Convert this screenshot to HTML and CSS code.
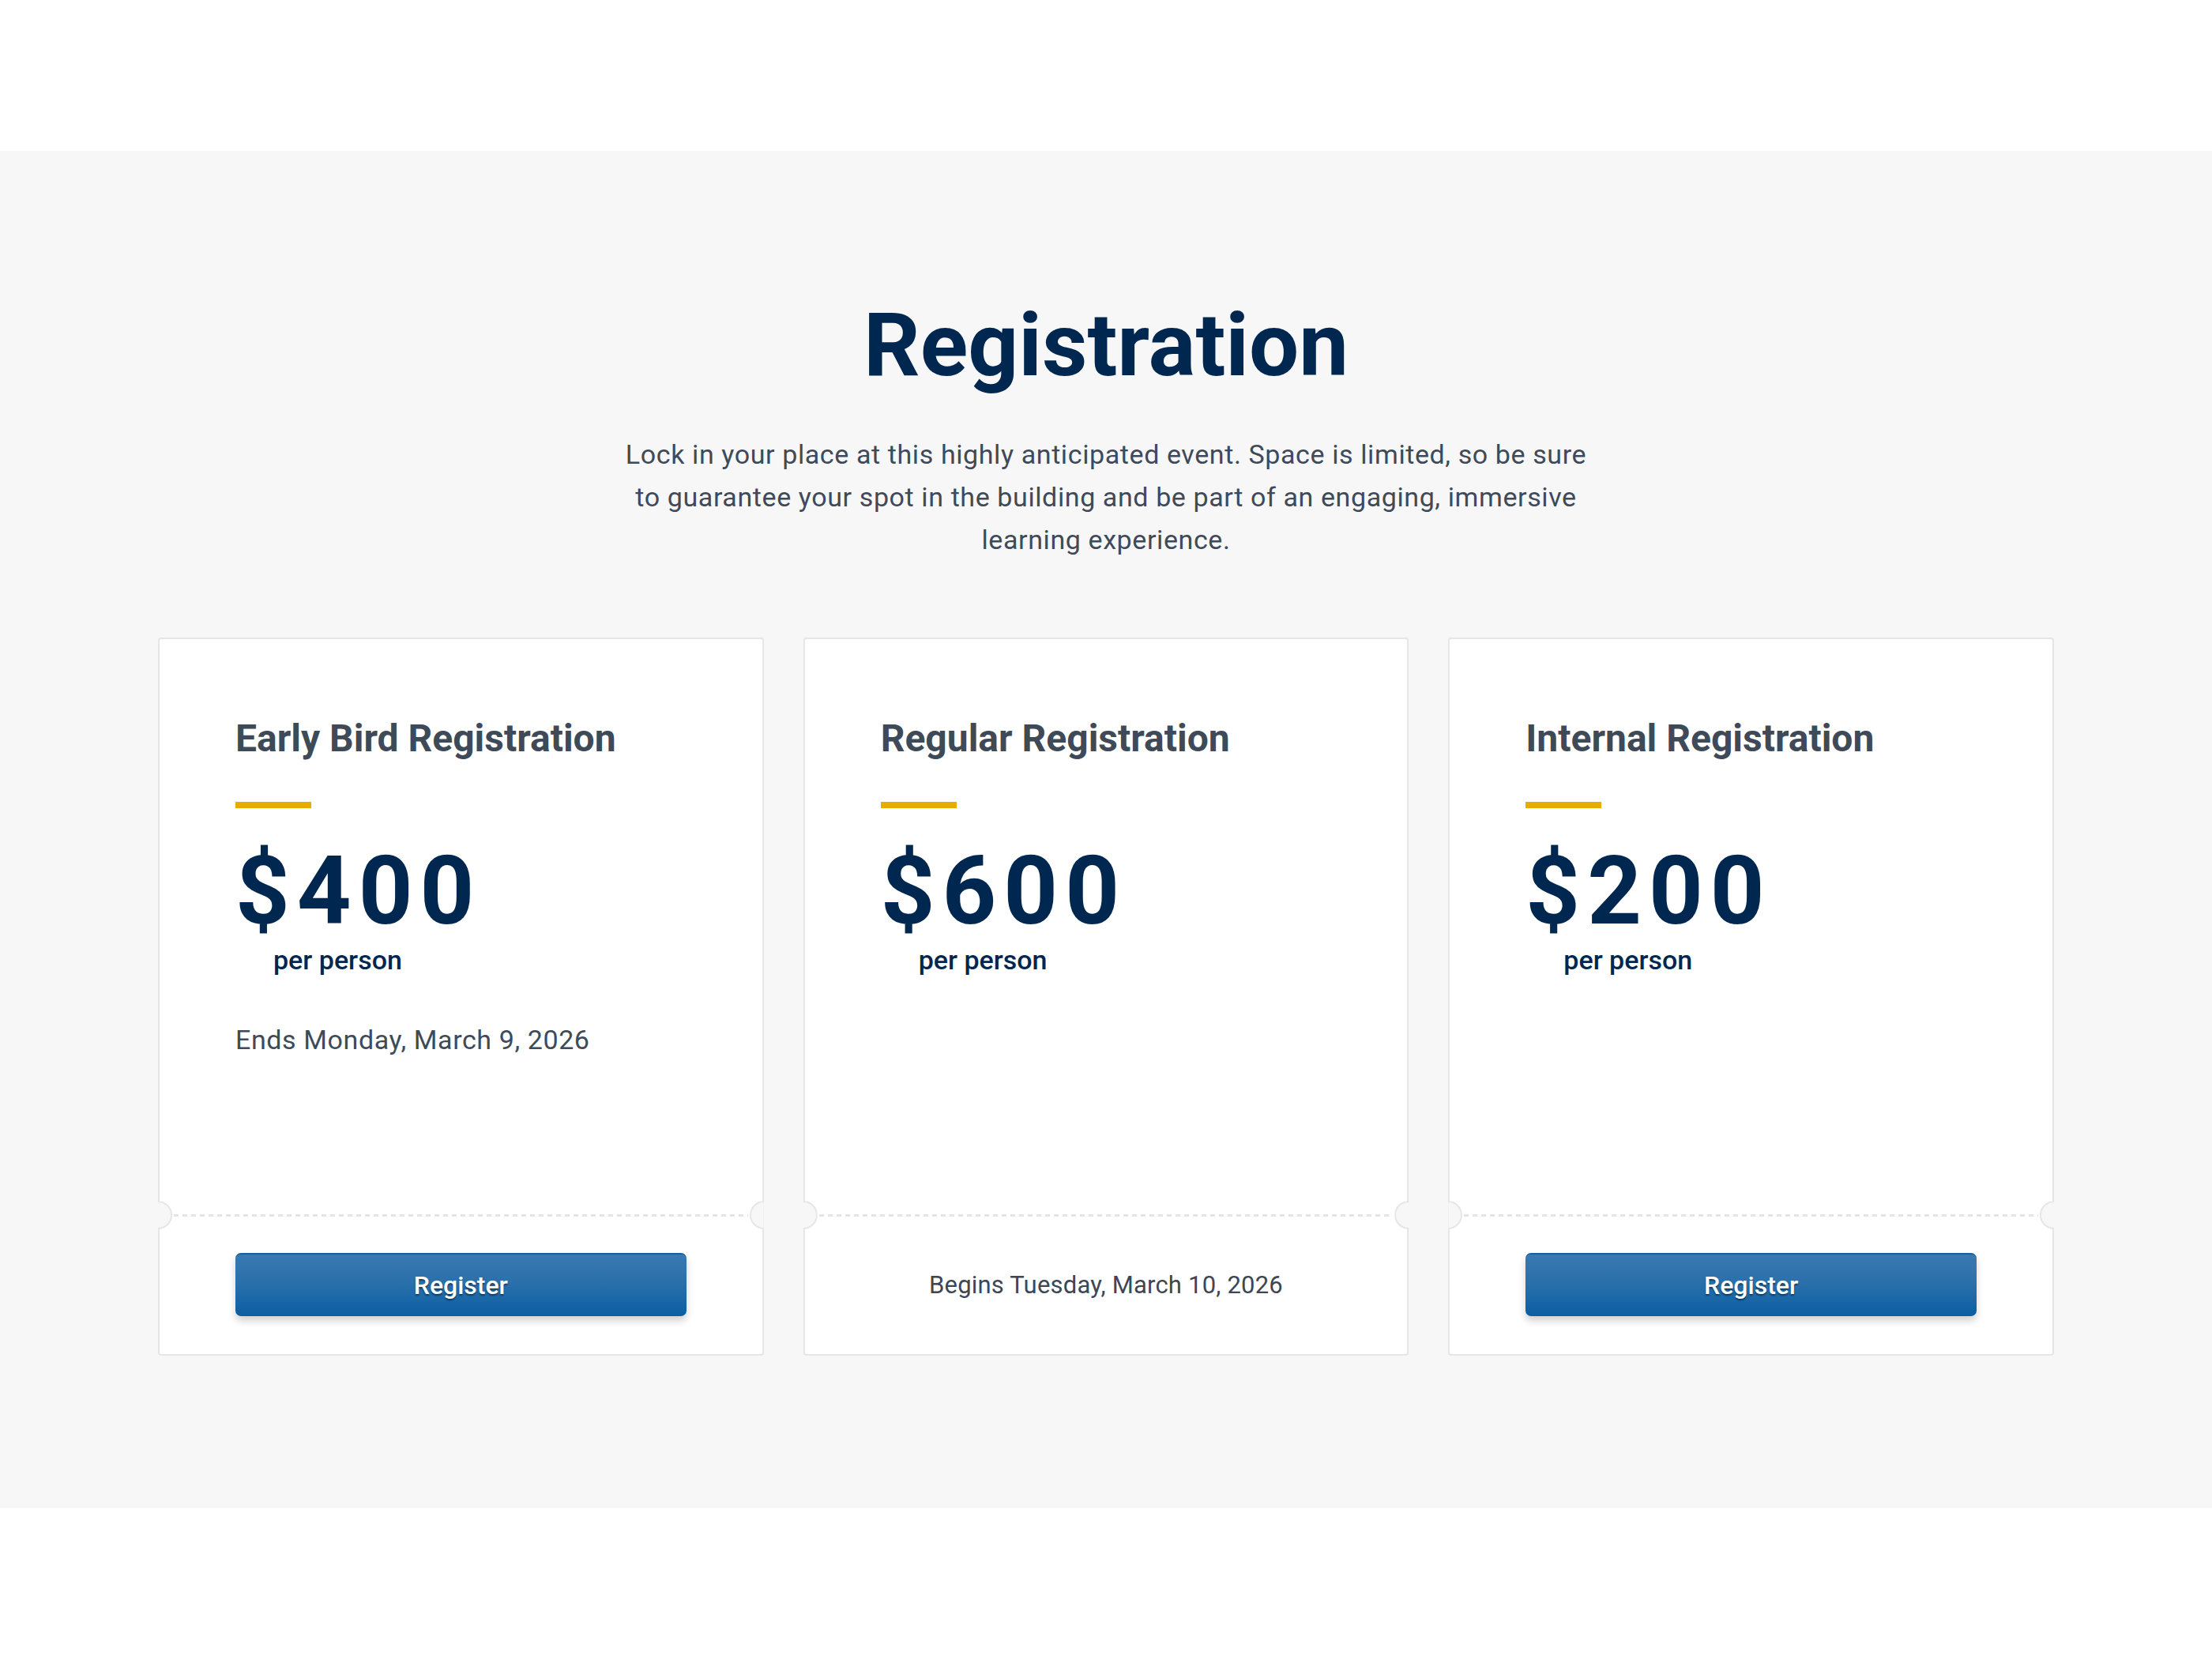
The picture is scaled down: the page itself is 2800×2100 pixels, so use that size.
FILE: index.html
```html
<!DOCTYPE html>
<html lang="en">
<head>
<meta charset="utf-8">
<title>Registration</title>
<link rel="stylesheet" href="styles.css">
</head>
<body>
<header class="top-bar"></header>
<section class="registration">
  <h1 class="reg-title">Registration</h1>
  <p class="reg-intro">Lock in your place at this highly anticipated event. Space is limited, so be sure to guarantee your spot in the building and be part of an engaging, immersive learning experience.</p>
  <div class="cards">
    <article class="card">
      <div class="card-top">
        <h2 class="card-title">Early Bird Registration</h2>
        <div class="card-rule"></div>
        <div class="price">$400</div>
        <div class="per">per person</div>
        <div class="note">Ends Monday, March 9, 2026</div>
      </div>
      <div class="card-divider"><span class="notch notch-left"></span><span class="dash"></span><span class="notch notch-right"></span></div>
      <div class="card-bottom">
        <a class="btn" href="#">Register</a>
      </div>
    </article>
    <article class="card">
      <div class="card-top">
        <h2 class="card-title">Regular Registration</h2>
        <div class="card-rule"></div>
        <div class="price">$600</div>
        <div class="per">per person</div>
      </div>
      <div class="card-divider"><span class="notch notch-left"></span><span class="dash"></span><span class="notch notch-right"></span></div>
      <div class="card-bottom">
        <span class="begins">Begins Tuesday, March 10, 2026</span>
      </div>
    </article>
    <article class="card">
      <div class="card-top">
        <h2 class="card-title">Internal Registration</h2>
        <div class="card-rule"></div>
        <div class="price">$200</div>
        <div class="per">per person</div>
      </div>
      <div class="card-divider"><span class="notch notch-left"></span><span class="dash"></span><span class="notch notch-right"></span></div>
      <div class="card-bottom">
        <a class="btn" href="#">Register</a>
      </div>
    </article>
  </div>
</section>
<footer class="bottom-bar"></footer>
</body>
</html>
```

FILE: styles.css
```css
* { box-sizing: border-box; }
html, body { margin: 0; padding: 0; background: #ffffff; }
body { font-family: Roboto, "Liberation Sans", Arial, sans-serif; color: #3e4a58; }

.top-bar { height: 191px; background: #ffffff; }
.bottom-bar { height: 191px; background: #ffffff; }

.registration {
  background: #f7f7f7;
  padding: 179px 200px 193px;
  display: flex;
  flex-direction: column;
  align-items: center;
}

.reg-title {
  margin: 0;
  font-size: 112px;
  line-height: 1.2;
  font-weight: 700;
  color: #00274f;
  letter-spacing: 0;
  text-align: center;
}

.reg-intro {
  margin: 44px 0 0;
  max-width: 1230px;
  font-size: 34px;
  line-height: 54px;
  letter-spacing: 0.6px;
  color: #3e4a5a;
  text-align: center;
}

.cards {
  margin-top: 97px;
  width: 2400px;
  display: grid;
  grid-template-columns: repeat(3, 1fr);
  gap: 50px;
}

.card {
  background: #ffffff;
  border: 2px solid #e6e6e6;
  border-radius: 4px;
  display: flex;
  flex-direction: column;
}

.card-top {
  height: 729px;
  padding: 97px 96px 0;
  display: flex;
  flex-direction: column;
  align-items: flex-start;
}

.card-title {
  margin: 0;
  font-size: 48px;
  line-height: 1.2;
  font-weight: 700;
  color: #3e4a58;
}

.card-rule {
  margin-top: 51px;
  width: 96px;
  height: 8px;
  background: #eaab00;
}

.price {
  margin-top: 51px;
  font-size: 120px;
  line-height: 0.9;
  font-weight: 700;
  color: #00274f;
  letter-spacing: 9px;
}

.per {
  margin: 13px 0 0 48px;
  font-size: 34px;
  line-height: 1.2;
  font-weight: 500;
  color: #00274f;
}

.note {
  margin-top: 55px;
  font-size: 34px;
  line-height: 1.5;
  letter-spacing: 0.6px;
  color: #3e4a58;
}

.card-divider {
  position: relative;
  height: 0;
  display: flex;
  align-items: center;
}

.dash {
  flex: 1;
  height: 3px;
  margin: 0 18px;
  background-image: repeating-linear-gradient(to right, #e4e4e4 0 6px, transparent 6px 11px);
}

.notch {
  position: absolute;
  top: -18px;
  width: 36px;
  height: 36px;
  border-radius: 50%;
  background: #f7f7f7;
  border: 2px solid #e6e6e6;
}
.notch-left { left: -20px; clip-path: inset(0 0 0 18px); }
.notch-right { right: -20px; clip-path: inset(0 18px 0 0); }

.card-bottom {
  height: 176px;
  padding: 0 96px;
  display: flex;
  align-items: center;
  justify-content: center;
}

.btn {
  width: 100%;
  height: 80px;
  display: flex;
  align-items: center;
  justify-content: center;
  border-radius: 7px;
  border-top: 2px solid #1d5f96;
  background: linear-gradient(to bottom, #3b79b1 0%, #2a70ab 45%, #0b5ea2 100%);
  box-shadow: 0 6px 10px rgba(0, 0, 0, 0.18);
  color: #ffffff;
  text-decoration: none;
  font-size: 32px;
  font-weight: 500;
  text-shadow: 0 2px 2px rgba(0, 0, 0, 0.45);
}

.begins {
  font-size: 31px;
  letter-spacing: 0.2px;
  color: #3e4654;
}
```
